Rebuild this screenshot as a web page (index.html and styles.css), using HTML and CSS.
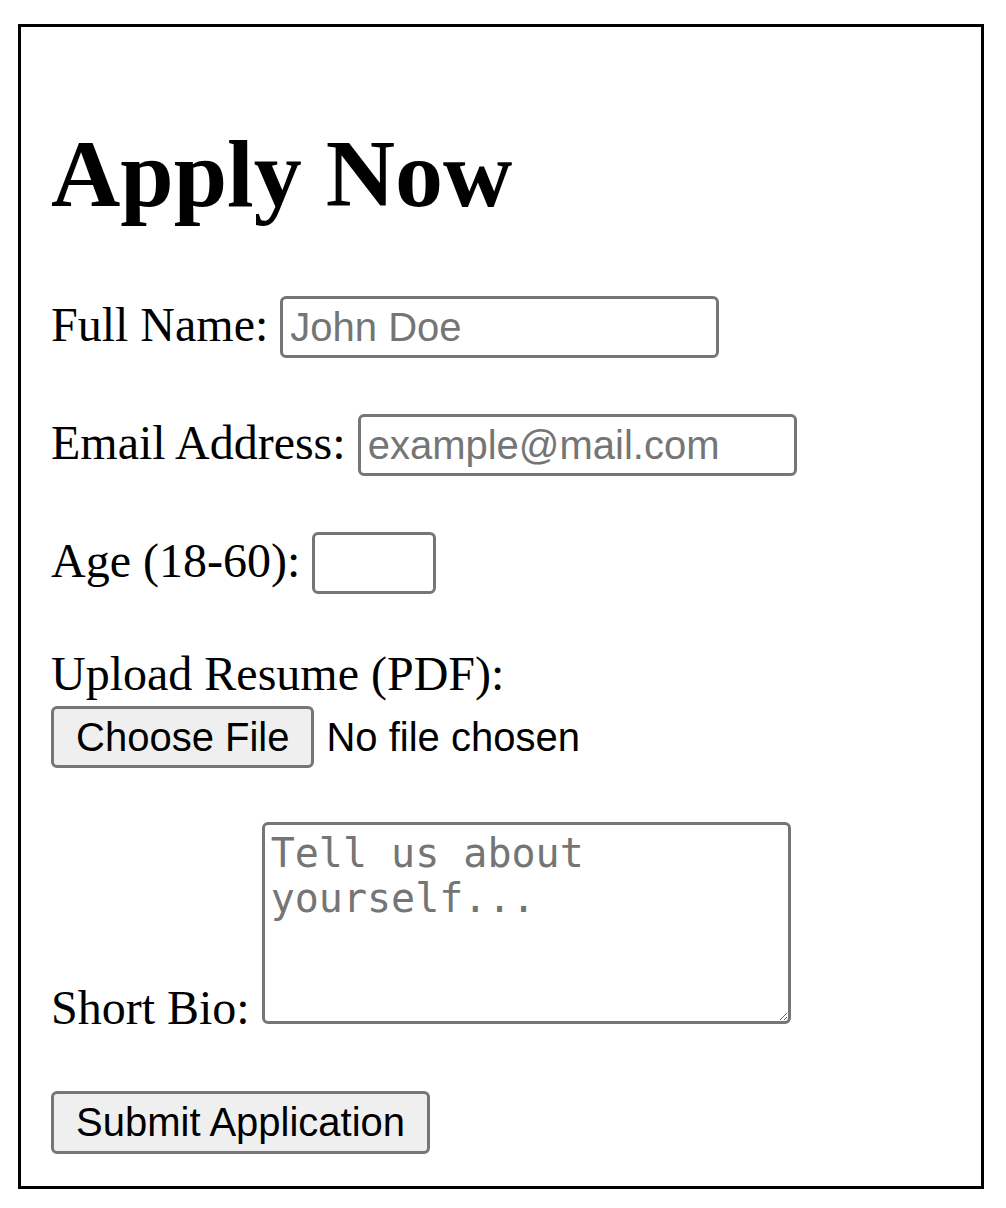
FILE: index.html
```html
<!DOCTYPE html>
<html lang="en">
<head>
<meta charset="utf-8">
<title>Apply Now</title>
<link rel="stylesheet" href="styles.css">
</head>
<body>
<form class="apply-form">
  <h1 class="title">Apply Now</h1>
  <div class="row row-name"><label for="name">Full Name:</label> <input class="field field-text" id="name" type="text" placeholder="John Doe"></div>
  <div class="row row-email"><label for="email">Email Address:</label> <input class="field field-text" id="email" type="email" placeholder="example@mail.com"></div>
  <div class="row row-age"><label for="age">Age (18-60):</label> <input class="field field-age" id="age" type="number" min="18" max="60"></div>
  <div class="row row-upload-label"><label for="resume">Upload Resume (PDF):</label></div>
  <div class="row row-upload"><input class="file" id="resume" type="file" accept=".pdf"></div>
  <div class="row row-bio"><label for="bio">Short Bio:</label> <textarea class="field bio" id="bio" placeholder="Tell us about yourself..."></textarea></div>
  <div class="row row-submit"><button class="btn" type="submit">Submit Application</button></div>
</form>
</body>
</html>
```

FILE: styles.css
```css
* {
  box-sizing: border-box;
}

html {
  background: #fff;
}

body {
  margin: 24px 22px 20px 18px;
  font-family: "Liberation Serif", "Times New Roman", serif;
  font-size: 48px;
  line-height: 54px;
  color: #000;
}

.apply-form {
  border: 3px solid #000;
  padding: 30px 30px 32px;
}

.title {
  font-size: 96px;
  line-height: 108px;
  font-weight: 700;
  margin: 63px 0 0;
}

.row {
  margin-top: 56px;
}

.row-name {
  margin-top: 68px;
}

.row-upload-label {
  margin-top: 53px;
}

.row-upload {
  margin-top: 5px;
}

.row-bio {
  margin-top: 54px;
}

.row-submit {
  margin-top: 56px;
}

.field {
  font-family: "Liberation Sans", Arial, sans-serif;
  font-size: 40px;
  color: #000;
  border: 3px solid #767676;
  border-radius: 6px;
  background: #fff;
  margin: 0;
  vertical-align: baseline;
  outline: none;
}

.field::placeholder {
  color: #757575;
  opacity: 1;
}

.field-text {
  width: 439px;
  height: 62px;
  padding: 0 7px;
  line-height: normal;
}

.field-age {
  width: 124px;
  height: 62px;
  padding: 0 7px;
  line-height: normal;
  -moz-appearance: textfield;
  appearance: textfield;
}

.field-age::-webkit-inner-spin-button,
.field-age::-webkit-outer-spin-button {
  -webkit-appearance: none;
  margin: 0;
}

.bio {
  font-family: "DejaVu Sans Mono", "Liberation Mono", monospace;
  font-size: 40px;
  width: 529px;
  height: 202px;
  padding: 6px;
  line-height: 45px;
  resize: both;
}

.file {
  font-family: "Liberation Sans", Arial, sans-serif;
  font-size: 40px;
  color: #000;
  width: 580px;
  margin: 0;
  padding: 0;
  vertical-align: baseline;
}

.file::file-selector-button {
  font: inherit;
  height: 62px;
  padding: 0 22px;
  margin: 0 12px 0 0;
  border: 3px solid #767676;
  border-radius: 6px;
  background: #efefef;
  color: #000;
}

.btn {
  font-family: "Liberation Sans", Arial, sans-serif;
  font-size: 40px;
  color: #000;
  height: 63px;
  padding: 0 22px;
  margin: 0;
  border: 3px solid #767676;
  border-radius: 6px;
  background: #efefef;
  line-height: normal;
  vertical-align: baseline;
}
```
